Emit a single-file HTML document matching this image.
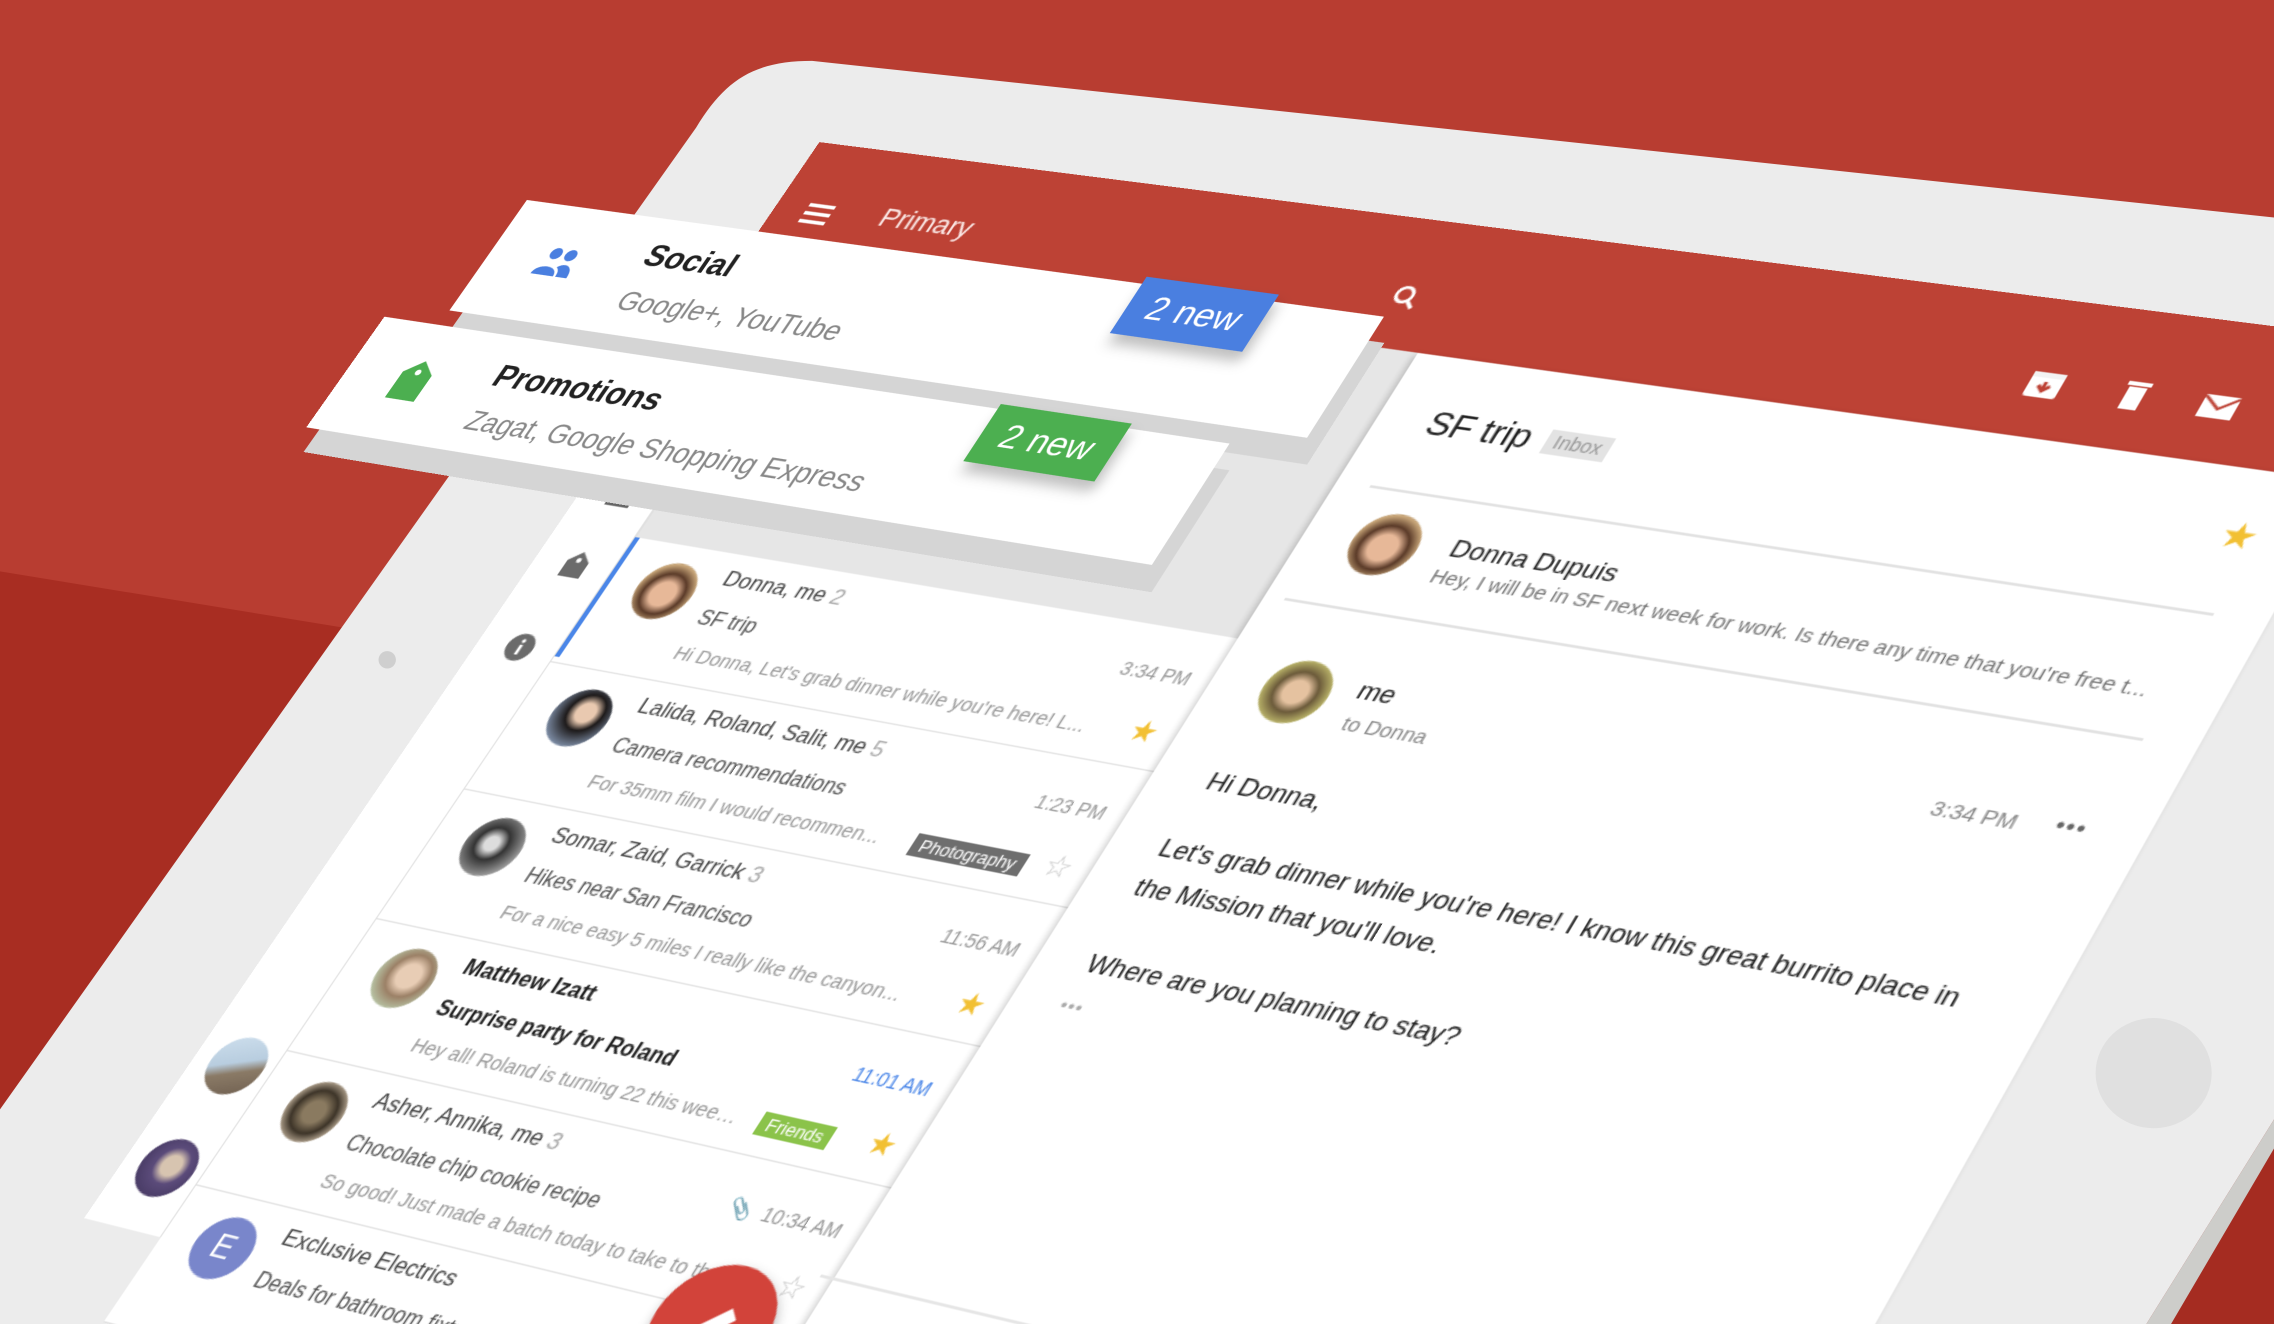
<!DOCTYPE html>
<html><head><meta charset="utf-8"><style>
*{margin:0;padding:0;box-sizing:border-box}
html,body{width:2274px;height:1324px;overflow:hidden;background:#b83d31}
.w{position:absolute;left:0;top:0;width:1568px;height:913px;transform:scale(1.45026,1.45016);transform-origin:0 0;overflow:hidden}
.s{position:absolute;left:0;top:0;width:1200px;height:900px;transform-origin:0 0;transform:matrix3d(0.73232,0.08970,0,-0.00011332,-0.56796,0.75757,0,-0.00007961,0,0,1,0,565,98,0,1);background:#fff;font-family:"Liberation Sans",Arial,sans-serif;overflow:visible}
.a{position:absolute;white-space:nowrap;line-height:1.2}
.row{position:absolute;left:66px;width:484px;height:105px;border-bottom:1.5px solid #e2e2e2;background:#fff}
.av{position:absolute;left:27px;top:14px;width:46px;height:46px;border-radius:50%}
.nm{position:absolute;left:89px;top:10px;font-size:17px;color:#444;white-space:nowrap}
.nm i{font-style:normal;color:#aaa}
.sb{position:absolute;left:89px;top:44px;font-size:16px;color:#555;white-space:nowrap}
.sn{position:absolute;left:89px;top:73px;font-size:15px;color:#9a9a9a;white-space:nowrap;overflow:hidden;text-overflow:ellipsis}
.tm{position:absolute;right:15px;top:27px;font-size:14px;color:#999;white-space:nowrap}
.st{position:absolute;right:14px;top:68px;font-size:22px;font-family:"DejaVu Sans",sans-serif;color:#f2c033;line-height:1}
.so{color:#c8c8c8}
.lb{position:absolute;top:73px;font-size:13px;color:#fff;padding:1px 6px;white-space:nowrap}
.card{position:absolute;background:#fff}
.side{position:absolute;background:#d5d5d5}
.badge{position:absolute;width:105px;height:48px;color:#fff;font-size:27px;text-align:center;line-height:48px;box-shadow:4px 8px 10px rgba(0,0,0,.25)}
</style></head><body>
<div class="w">
<svg width="1568" height="913" viewBox="0 0 1568 913" style="position:absolute;left:0;top:0">
<rect width="1568" height="913" fill="#b83d31"/>
<polygon points="0,394 232,432 800,520 0,913" fill="#a82d22"/>
<polygon points="1568,700 1568,913 1380,913" fill="#a52c21"/>
<path d="M480,88 C500,55 520,42 560,42 L1568,150 L1568,772 L1480,913 L0,913 L0,765 Z" fill="#ececec"/>
<polygon points="1568,772 1568,792 1497,913 1480,913" fill="#cdcdca"/>
<circle cx="267" cy="455" r="6" fill="#cfcfcf"/>
<ellipse cx="1485" cy="740" rx="40" ry="38" fill="#e0e0e0"/>
</svg>
<div class="s">
 <div style="position:absolute;left:0;top:0;width:1200px;height:104px;background:#bd4235"></div>
 <div style="position:absolute;left:26px;top:51px;width:22px;height:3px;background:#fff;box-shadow:0 7px 0 #fff,0 14px 0 #fff"></div>
 <div class="a" style="left:89px;top:42px;font-size:22px;color:#fbe9e7">Primary</div>
 <svg class="a" style="left:505px;top:51px" width="24" height="24"><circle cx="10" cy="10" r="6" stroke="#fff" stroke-width="2.5" fill="none"/><line x1="14.5" y1="14.5" x2="20" y2="20" stroke="#fff" stroke-width="2.8"/></svg>
 <svg class="a" style="left:968px;top:52px" width="26" height="24"><rect x="1" y="3" width="22" height="19" rx="2" fill="#fff"/><rect x="1" y="3" width="22" height="4" fill="#f3f3f3"/><path d="M12,10 L12,17 M8,13 L12,17 L16,13" stroke="#bd4235" stroke-width="2.5" fill="none"/></svg>
 <svg class="a" style="left:1031px;top:51px" width="20" height="26"><rect x="1" y="2" width="16" height="3" fill="#fff"/><rect x="3" y="6" width="12" height="17" fill="#fff"/></svg>
 <svg class="a" style="left:1084px;top:54px" width="26" height="20"><rect x="1" y="1" width="23" height="17" fill="#fff"/><path d="M1,2 L12.5,11 L24,2" stroke="#bd4235" stroke-width="2" fill="none"/></svg>

 <div style="position:absolute;left:0;top:104px;width:550px;height:796px;background:#fff"></div>
 <div style="position:absolute;left:66px;top:104px;width:484px;height:231px;background:#e6e6e6"></div>
 <div style="position:absolute;left:65px;top:104px;width:1.5px;height:796px;background:#e0e0e0"></div>
 <svg class="a" style="left:24px;top:300px" width="22" height="16"><rect x="1" y="3" width="20" height="11" fill="#666"/></svg>
 <svg class="a" style="left:23px;top:352px" width="24" height="24"><path d="M12,1 L21,9 L21,22 L3,22 L3,9 Z" fill="#6b6b6b"/><circle cx="12" cy="8" r="2" fill="#fff"/></svg>
 <svg class="a" style="left:23px;top:421px" width="24" height="24"><circle cx="12" cy="12" r="11" fill="#6b6b6b"/><rect x="10.8" y="10" width="2.6" height="8" fill="#fff"/><circle cx="12" cy="6.8" r="1.6" fill="#fff"/></svg>
 <div class="a" style="left:14px;top:751px;width:44px;height:44px;border-radius:50%;background:linear-gradient(160deg,#cfe0ee 0%,#b8cddf 45%,#8a7a66 60%,#6d5d4e 100%)"></div>
 <div class="a" style="left:14px;top:831px;width:44px;height:44px;border-radius:50%;background:radial-gradient(circle at 55% 45%,#d7c4b0 0 22%,#5b4b7a 40%,#3a2f55 100%)"></div>

 <div class="row" style="top:335px">
  <div style="position:absolute;left:0;top:0;width:4px;height:100px;background:#4a86e8"></div>
  <div class="av" style="background:radial-gradient(circle at 50% 55%,#e7b898 0 28%,#5a3a28 48%,#c9a77a 70%,#8a6a45 100%)"></div>
  <div class="nm">Donna, me <i>2</i></div>
  <div class="sb">SF trip</div>
  <div class="sn" style="width:340px">Hi Donna, Let's grab dinner while you're here! L...</div>
  <div class="tm">3:34 PM</div>
  <div class="st">★</div>
 </div>
 <div class="row" style="top:440px">
  <div class="av" style="background:radial-gradient(circle at 55% 40%,#e9c9b0 0 20%,#1d1a1a 38%,#7f8fa8 75%,#e8e8e8 100%)"></div>
  <div class="nm">Lalida, Roland, Salit, me <i>5</i></div>
  <div class="sb">Camera recommendations</div>
  <div class="sn" style="width:255px">For 35mm film I would recommen...</div>
  <div class="lb" style="left:350px;background:#6e6e6e">Photography</div>
  <div class="tm">1:23 PM</div>
  <div class="st so">☆</div>
 </div>
 <div class="row" style="top:545px">
  <div class="av" style="background:radial-gradient(circle at 45% 45%,#ddd 0 15%,#333 35%,#777 60%,#eee 100%)"></div>
  <div class="nm">Somar, Zaid, Garrick <i>3</i></div>
  <div class="sb">Hikes near San Francisco</div>
  <div class="sn" style="width:340px">For a nice easy 5 miles I really like the canyon...</div>
  <div class="tm">11:56 AM</div>
  <div class="st">★</div>
 </div>
 <div class="row" style="top:650px">
  <div class="av" style="background:radial-gradient(circle at 55% 45%,#e8cdb5 0 25%,#9b8066 45%,#b9c7a8 75%,#6f7d5c 100%)"></div>
  <div class="nm" style="font-weight:bold;color:#222">Matthew Izatt</div>
  <div class="sb" style="font-weight:bold;color:#222">Surprise party for Roland</div>
  <div class="sn" style="width:265px">Hey all! Roland is turning 22 this week...</div>
  <div class="lb" style="left:368px;background:#8bc34a">Friends</div>
  <div class="tm" style="color:#4a86e8">11:01 AM</div>
  <div class="st">★</div>
 </div>
 <div class="row" style="top:755px">
  <div class="av" style="background:radial-gradient(circle at 50% 50%,#8a7a60 0 25%,#3d3428 50%,#d8c7b0 80%,#9a2a2a 100%)"></div>
  <div class="nm">Asher, Annika, me <i>3</i></div>
  <div class="sb">Chocolate chip cookie recipe</div>
  <div class="sn" style="width:340px">So good! Just made a batch today to take to the party...</div>
  <div class="tm">&#128206;&nbsp; 10:34 AM</div>
  <div class="st so">☆</div>
 </div>
 <div class="row" style="top:860px">
  <div class="av" style="background:#7986cb;color:#fff;font-size:24px;text-align:center;line-height:46px">E</div>
  <div class="nm">Exclusive Electrics</div>
  <div class="sb">Deals for bathroom fixtures</div>
 </div>

 <div style="position:absolute;left:550px;top:104px;width:650px;height:796px;background:#fff;box-shadow:-2px 2px 5px rgba(0,0,0,.18)"></div>
 <div class="a" style="left:588px;top:140px;font-size:26px;color:#222">SF trip</div>
 <div class="a" style="left:676px;top:147px;font-size:14px;color:#999;background:#e3e3e3;padding:1px 6px">Inbox</div>
 <div class="a" style="left:1142px;top:140px;font-size:26px;font-family:'DejaVu Sans',sans-serif;color:#f2c033;line-height:1">★</div>
 <div style="position:absolute;left:575px;top:208px;width:590px;height:1.5px;background:#e2e2e2"></div>
 <div class="a" style="left:586px;top:226px;width:48px;height:48px;border-radius:50%;background:radial-gradient(circle at 50% 55%,#e7b898 0 28%,#5a3a28 48%,#c9a77a 70%,#8a6a45 100%)"></div>
 <div class="a" style="left:657px;top:235px;font-size:19px;color:#222">Donna Dupuis</div>
 <div class="a" style="left:655px;top:259px;font-size:15px;color:#777;width:505px;overflow:hidden;text-overflow:ellipsis">Hey, I will be in SF next week for work. Is there any time that you're free t...</div>
 <div style="position:absolute;left:565px;top:300px;width:600px;height:1.5px;background:#e2e2e2"></div>
 <div class="a" style="left:588px;top:342px;width:48px;height:48px;border-radius:50%;background:radial-gradient(circle at 50% 50%,#e5c2a0 0 25%,#6b5a3a 45%,#c5c070 75%,#6f8a4a 100%)"></div>
 <div class="a" style="left:654px;top:347px;font-size:19px;color:#222">me</div>
 <div class="a" style="left:657px;top:374px;font-size:15px;color:#888">to Donna</div>
 <div class="a" style="left:1062px;top:362px;font-size:15px;color:#888">3:34 PM</div>
 <div class="a" style="left:1142px;top:358px;font-size:16px;color:#666;letter-spacing:1px">•••</div>
 <div class="a" style="left:591px;top:429px;font-size:19px;color:#222">Hi Donna,</div>
 <div class="a" style="left:587px;top:480px;font-size:18.6px;color:#222">Let's grab dinner while you're here! I know this great burrito place in</div>
 <div class="a" style="left:587px;top:510px;font-size:18.6px;color:#222">the Mission that you'll love.</div>
 <div class="a" style="left:587px;top:568px;font-size:18.6px;color:#222">Where are you planning to stay?</div>
 <div class="a" style="left:586px;top:603px;font-size:13px;color:#aaa;letter-spacing:1px">•••</div>
 <div style="position:absolute;left:540px;top:820px;width:620px;height:1.5px;background:#e6e6e6"></div>

 <div class="a" style="left:446px;top:826px;width:84px;height:84px;border-radius:50%;background:#d2433a;box-shadow:2px 4px 8px rgba(0,0,0,.3)">
  <svg width="84" height="84"><path d="M30,56 L30,49 L50,29 L57,36 L37,56 Z" fill="#fff"/></svg>
 </div>

 <div class="side" style="left:-193px;top:100px;width:715px;height:100px"></div>
 <div class="card" style="left:-205px;top:80px;width:715px;height:100px">
  <svg class="a" style="left:44px;top:34px" width="34" height="28"><circle cx="11" cy="7" r="5" fill="#4a7fe0"/><circle cx="24" cy="7" r="5" fill="#4a7fe0"/><path d="M1,26 C1,16 21,16 21,26 Z" fill="#4a7fe0"/><path d="M19,18 C24,13 33,15 33,26 L23,26 C23,22 22,20 19,18 Z" fill="#4a7fe0"/></svg>
  <div class="a" style="left:129px;top:16px;font-size:26px;font-weight:bold;color:#222">Social</div>
  <div class="a" style="left:132px;top:58px;font-size:23px;color:#888">Google+, YouTube</div>
 </div>
 <div class="badge" style="left:320px;top:74px;background:#4a7fe0">2 new</div>
 <div class="side" style="left:-243px;top:213px;width:713px;height:99px"></div>
 <div class="card" style="left:-255px;top:193px;width:713px;height:99px">
  <svg class="a" style="left:45px;top:30px" width="30" height="36"><path d="M15,1 L28,12 L28,35 L2,35 L2,12 Z" fill="#4caf50"/><circle cx="15" cy="11" r="2.5" fill="#fff"/></svg>
  <div class="a" style="left:125px;top:18px;font-size:26px;font-weight:bold;color:#222">Promotions</div>
  <div class="a" style="left:127px;top:59px;font-size:23px;color:#888">Zagat, Google Shopping Express</div>
 </div>
 <div class="badge" style="left:274px;top:189px;background:#4caf50">2 new</div>
</div>
</div>
</body></html>
